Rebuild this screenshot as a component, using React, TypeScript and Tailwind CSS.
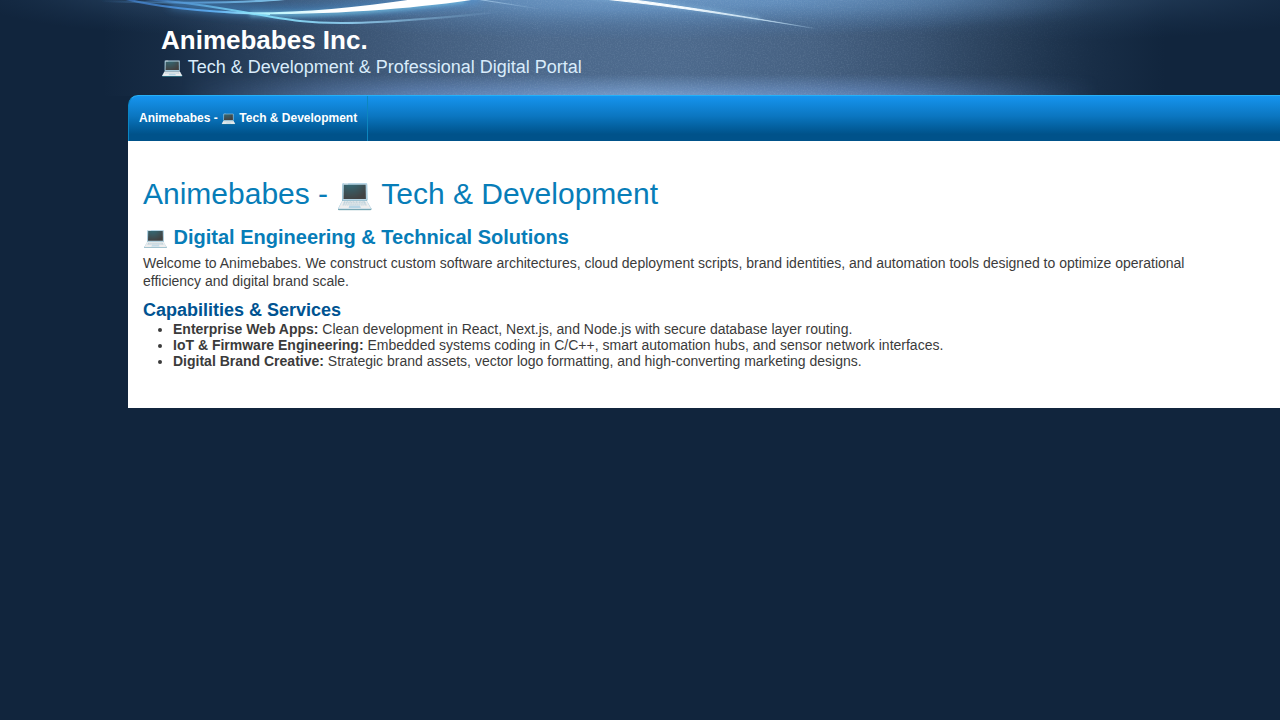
import * as React from 'react';

const services = [
  {
    name: 'Enterprise Web Apps:',
    text: 'Clean development in React, Next.js, and Node.js with secure database layer routing.',
  },
  {
    name: 'IoT & Firmware Engineering:',
    text: 'Embedded systems coding in C/C++, smart automation hubs, and sensor network interfaces.',
  },
  {
    name: 'Digital Brand Creative:',
    text: 'Strategic brand assets, vector logo formatting, and high-converting marketing designs.',
  },
];

// Light streaks over a hazy blue glow, behind the header
function HeaderArt() {
  return (
    <svg
      className="absolute left-0 top-0 h-[96px] w-[1280px]"
      viewBox="0 0 1280 96"
      aria-hidden="true"
    >
      <defs>
        <linearGradient id="haze" x1="0" x2="1">
          <stop offset="0.08" stopColor="#4b6789" stopOpacity="0" />
          <stop offset="0.13" stopColor="#4b6789" stopOpacity="0.1" />
          <stop offset="0.19" stopColor="#4b6789" stopOpacity="0.36" />
          <stop offset="0.26" stopColor="#4b6789" stopOpacity="0.66" />
          <stop offset="0.33" stopColor="#4b6789" stopOpacity="0.86" />
          <stop offset="0.42" stopColor="#4d6a8d" stopOpacity="0.98" />
          <stop offset="0.53" stopColor="#4d6a8d" />
          <stop offset="0.63" stopColor="#4b6789" stopOpacity="0.92" />
          <stop offset="0.72" stopColor="#4b6789" stopOpacity="0.66" />
          <stop offset="0.79" stopColor="#45607f" stopOpacity="0.42" />
          <stop offset="0.85" stopColor="#3a5573" stopOpacity="0.2" />
          <stop offset="0.91" stopColor="#3a5573" stopOpacity="0" />
        </linearGradient>
        <radialGradient id="topGlow">
          <stop offset="0" stopColor="#7aa9d8" stopOpacity="0.8" />
          <stop offset="0.35" stopColor="#6c9dcf" stopOpacity="0.65" />
          <stop offset="0.7" stopColor="#5b8abc" stopOpacity="0.26" />
          <stop offset="1" stopColor="#4574aa" stopOpacity="0" />
        </radialGradient>
        <linearGradient id="bottomAcross" x1="0" x2="1">
          <stop offset="0" stopColor="#6f97d3" stopOpacity="0" />
          <stop offset="0.25" stopColor="#6f97d3" stopOpacity="0.6" />
          <stop offset="0.5" stopColor="#7ba2d2" stopOpacity="0.9" />
          <stop offset="0.75" stopColor="#6f97d3" stopOpacity="0.65" />
          <stop offset="1" stopColor="#6f97d3" stopOpacity="0" />
        </linearGradient>
        <linearGradient id="bottomDown" x1="0" x2="0" y1="0" y2="1">
          <stop offset="0" stopColor="#000000" />
          <stop offset="0.45" stopColor="#777777" />
          <stop offset="1" stopColor="#ffffff" />
        </linearGradient>
        <mask id="bottomMask">
          <rect x="180" y="74" width="920" height="22" fill="url(#bottomDown)" />
        </mask>
        <linearGradient id="streak" gradientUnits="userSpaceOnUse" x1="125" x2="270" y1="0" y2="0">
          <stop offset="0" stopColor="#3f7fd6" stopOpacity="0.6" />
          <stop offset="0.6" stopColor="#5aa9ec" />
          <stop offset="1" stopColor="#a9f0fb" />
        </linearGradient>
        <linearGradient id="lowStreak" gradientUnits="userSpaceOnUse" x1="145" x2="500" y1="0" y2="0">
          <stop offset="0" stopColor="#3f7fd6" stopOpacity="0.5" />
          <stop offset="0.3" stopColor="#7fdcf7" />
          <stop offset="0.6" stopColor="#8cc6e8" stopOpacity="0.95" />
          <stop offset="1" stopColor="#8fbce0" stopOpacity="0" />
        </linearGradient>
        <linearGradient id="topStreak" gradientUnits="userSpaceOnUse" x1="100" x2="290" y1="0" y2="0">
          <stop offset="0" stopColor="#4f97dd" stopOpacity="0" />
          <stop offset="0.5" stopColor="#5b9fda" stopOpacity="0.8" />
          <stop offset="1" stopColor="#86c9ec" />
        </linearGradient>
        <linearGradient id="beam" gradientUnits="userSpaceOnUse" x1="225" x2="330" y1="0" y2="0">
          <stop offset="0" stopColor="#7ccdf5" stopOpacity="0" />
          <stop offset="0.4" stopColor="#b3f3fc" />
          <stop offset="1" stopColor="#ffffff" />
        </linearGradient>
        <linearGradient id="ray" gradientUnits="userSpaceOnUse" x1="600" x2="818" y1="0" y2="0">
          <stop offset="0" stopColor="#ffffff" />
          <stop offset="0.4" stopColor="#f4fbff" />
          <stop offset="0.7" stopColor="#c9e2f3" stopOpacity="0.8" />
          <stop offset="1" stopColor="#a8d0ee" stopOpacity="0" />
        </linearGradient>
        <linearGradient id="thinRay" gradientUnits="userSpaceOnUse" x1="476" x2="540" y1="0" y2="0">
          <stop offset="0" stopColor="#a8cdeb" stopOpacity="0.9" />
          <stop offset="1" stopColor="#a8cdeb" stopOpacity="0" />
        </linearGradient>
        <filter id="glow" filterUnits="userSpaceOnUse" x="0" y="-40" width="1280" height="130">
          <feGaussianBlur stdDeviation="5" />
        </filter>
        <filter id="halo" filterUnits="userSpaceOnUse" x="0" y="-40" width="1280" height="130">
          <feGaussianBlur stdDeviation="2" />
        </filter>
        <filter id="soft" filterUnits="userSpaceOnUse" x="0" y="-40" width="1280" height="130">
          <feGaussianBlur stdDeviation="0.5" />
        </filter>
        <filter id="grain" x="0" y="0" width="100%" height="100%">
          <feTurbulence type="fractalNoise" baseFrequency="0.7" numOctaves="2" seed="4" />
          <feColorMatrix values="0 0 0 0 0.6  0 0 0 0 0.75  0 0 0 0 0.9  0.9 0 0 0 -0.38" />
        </filter>
        <linearGradient id="grainFade" x1="0" x2="1">
          <stop offset="0.15" stopColor="#000000" />
          <stop offset="0.4" stopColor="#777777" />
          <stop offset="0.65" stopColor="#777777" />
          <stop offset="0.88" stopColor="#000000" />
        </linearGradient>
        <mask id="grainMask">
          <rect width="1280" height="96" fill="url(#grainFade)" />
        </mask>
      </defs>

      <rect width="1280" height="96" fill="url(#haze)" />
      <ellipse cx="640" cy="-6" rx="460" ry="46" fill="url(#topGlow)" />
      <ellipse cx="860" cy="-6" rx="270" ry="42" fill="url(#topGlow)" opacity="0.45" />
      <ellipse cx="1060" cy="-10" rx="330" ry="50" fill="url(#topGlow)" opacity="0.22" />
      <ellipse cx="190" cy="-10" rx="230" ry="44" fill="url(#topGlow)" opacity="0.25" />
      <rect x="180" y="74" width="920" height="22" fill="url(#bottomAcross)" mask="url(#bottomMask)" />
      <g mask="url(#grainMask)">
        <rect width="1280" height="96" filter="url(#grain)" opacity="0.6" />
      </g>

      <g fill="none">
        <path d="M170 2C220 9 270 14 330 11S430 4 480 -3" stroke="#4d9be0" strokeWidth="10" opacity="0.55" filter="url(#glow)" />
        <path d="M250 14C310 16 385 11 465 0" stroke="#8be4fb" strokeWidth="4" opacity="0.6" filter="url(#halo)" />
        <path d="M590 -4C660 2 710 11 760 19" stroke="#9fd4f5" strokeWidth="4" opacity="0.35" filter="url(#halo)" />
      </g>

      <g fill="none" filter="url(#soft)">
        <path d="M126 -1C160 8 205 12 270 14" stroke="url(#streak)" strokeWidth="2" />
        <path d="M145 -1C215 4 255 16 300 21C345 26 410 21 500 12" stroke="url(#lowStreak)" strokeWidth="2" />
        <path d="M100 1C160 3 235 4 285 -1" stroke="url(#topStreak)" strokeWidth="2" />
        <path d="M225 12C290 14 345 9 415 -1H478C420 8 330 16 225 14Z" fill="url(#beam)" />
        <path d="M476 -1L540 9" stroke="url(#thinRay)" strokeWidth="1" />
        <path d="M604 -1H626C690 7 752 18 818 29C745 17 680 7 604 -1Z" fill="url(#ray)" stroke="url(#ray)" strokeWidth="1" />
      </g>
    </svg>
  );
}

function Header() {
  return (
    <header className="relative flex h-[95px] flex-col pl-[161px] pt-6">
      <p className="text-[26px] font-bold leading-8 text-white">Animebabes Inc.</p>
      <p className="text-lg leading-[22px] text-[#d9ecfb]">
        💻 Tech &amp; Development &amp; Professional Digital Portal
      </p>
    </header>
  );
}

function NavBar() {
  return (
    <nav className="flex h-[46px] overflow-hidden rounded-tl-[10px] border-l border-t border-l-[#0a86c4] border-t-[#27b0f5] bg-linear-to-b from-[#1694ef] via-[#0b76c0] via-45% to-[#00528a] to-85%">
      <a
        href="#"
        className="flex items-center border-r border-[#0d86bf] px-[10px] pb-[2px] text-xs font-bold text-white"
      >
        Animebabes - 💻 Tech &amp; Development
      </a>
    </nav>
  );
}

export default function App() {
  return (
    <div className="relative min-h-screen overflow-hidden bg-[#11253d] font-['Liberation_Sans',Arial,sans-serif]">
      <HeaderArt />
      <Header />
      <div className="relative ml-32">
        <NavBar />
        <main className="bg-white px-[15px] pb-[39px] pt-[35px] text-sm text-[#3b3b3b]">
          <h1 className="text-3xl leading-9 text-[#077db8]">Animebabes - 💻 Tech &amp; Development</h1>
          <h2 className="mt-3 text-xl font-bold leading-[26px] text-[#077db8]">
            💻 Digital Engineering &amp; Technical Solutions
          </h2>
          <p className="mt-1 max-w-[1085px] leading-[18px]">
            Welcome to Animebabes. We construct custom software architectures, cloud deployment scripts, brand
            identities, and automation tools designed to optimize operational efficiency and digital brand scale.
          </p>
          <h3 className="mt-[10px] text-lg font-bold leading-[21px] text-[#005391]">Capabilities &amp; Services</h3>
          <ul className="list-disc pl-[30px] leading-4">
            {services.map((service) => (
              <li key={service.name}>
                <strong>{service.name}</strong> {service.text}
              </li>
            ))}
          </ul>
        </main>
      </div>
    </div>
  );
}
